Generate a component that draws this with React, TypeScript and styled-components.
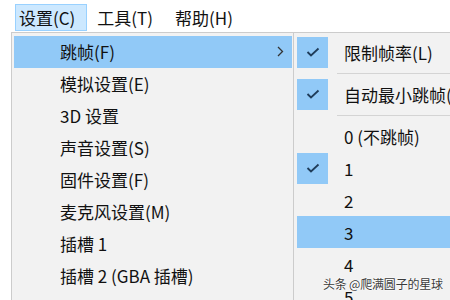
import React from "react";
import styled, { createGlobalStyle } from "styled-components";

const Global = createGlobalStyle`
  html, body { margin: 0; padding: 0; background: #ffffff; }
  body { font-family: "Noto Sans CJK SC", "Noto Sans", sans-serif; }
`;

const Screen = styled.div`
  position: relative;
  width: 450px;
  height: 300px;
  overflow: hidden;
  background: #ffffff;
  color: #111111;
  font-family: "Noto Sans CJK SC", "Noto Sans", sans-serif;
`;

const MenuBar = styled.div`
  display: flex;
  align-items: stretch;
  height: 32px;
  box-sizing: border-box;
  padding: 4px 0 1px 15px;
  gap: 6px;
  background: #ffffff;
`;

const BarItem = styled.div<{ $active?: boolean }>`
  display: flex;
  align-items: center;
  box-sizing: border-box;
  padding: 0 11px 1px 3px;
  font-size: 17px;
  border: 1px solid ${(p) => (p.$active ? "#99d1ff" : "transparent")};
  background: ${(p) => (p.$active ? "#cce8ff" : "transparent")};
`;

const Dropdowns = styled.div`
  display: flex;
  align-items: flex-start;
  margin-left: 11px;
`;

const MainMenu = styled.div`
  width: 284px;
  flex: none;
  box-sizing: border-box;
  background: #f2f2f2;
  border: 1px solid #cccccc;
  padding: 3px 2px;
`;

const Item = styled.div<{ $hl?: boolean }>`
  display: flex;
  align-items: center;
  height: 32px;
  box-sizing: border-box;
  padding: 0 8px 1px 46px;
  font-size: 17px;
  background: ${(p) => (p.$hl ? "#91c9f7" : "transparent")};
  white-space: nowrap;
`;

const Label = styled.span`
  flex: 1;
`;

const SubMenu = styled.div`
  flex: none;
  width: 200px;
  margin-left: -2px;
  box-sizing: border-box;
  background: #f2f2f2;
  border-left: 1px solid #cccccc;
  border-top: 1px solid #cccccc;
  padding: 3px 0 0 3px;
`;

const SubItem = styled.div<{ $hl?: boolean }>`
  display: flex;
  align-items: center;
  height: 32px;
  font-size: 17px;
  background: ${(p) => (p.$hl ? "#91c9f7" : "transparent")};
  white-space: nowrap;
`;

const CheckCell = styled.div`
  width: 32px;
  height: 32px;
  flex: none;
  display: flex;
  align-items: center;
  justify-content: flex-start;
  margin-right: 15px;
`;

const CheckBox = styled.div`
  width: 31px;
  height: 31px;
  background: #91c9f7;
  display: flex;
  align-items: center;
  justify-content: center;
`;

const Separator = styled.div`
  height: 10px;
  display: flex;
  align-items: center;
  padding-left: 40px;
  &::after {
    content: "";
    flex: 1;
    height: 1px;
    background: #d4d4d4;
  }
`;

const Watermark = styled.div`
  position: absolute;
  left: 323px;
  top: 275px;
  font-size: 12px;
  letter-spacing: -0.2px;
  color: #3a3a3a;
  text-shadow: 0 0 2px #ffffff, 0 0 2px #ffffff, 0 0 1px #ffffff;
  white-space: nowrap;
`;

const Check = () => (
  <svg width="14" height="10" viewBox="0 0 14 10">
    <polyline points="1.5,5 5,8.5 12.5,1.5" fill="none" stroke="#1f3c5a" strokeWidth="1.8" />
  </svg>
);

const Chevron = () => (
  <svg width="7" height="11" viewBox="0 0 7 11">
    <polyline points="1,1 5.5,5.5 1,10" fill="none" stroke="#333" strokeWidth="1.3" />
  </svg>
);

const mainItems = [
  "模拟设置(E)",
  "3D 设置",
  "声音设置(S)",
  "固件设置(F)",
  "麦克风设置(M)",
  "插槽 1",
  "插槽 2 (GBA 插槽)",
  "路径设置与显示设置(P)",
];

const frames = [
  { t: "0 (不跳帧)", c: false, h: false },
  { t: "1", c: true, h: false },
  { t: "2", c: false, h: false },
  { t: "3", c: false, h: true },
  { t: "4", c: false, h: false },
  { t: "5", c: false, h: false },
];

export default function App() {
  return (
    <Screen>
      <Global />
      <MenuBar>
        <BarItem $active>设置(C)</BarItem>
        <BarItem>工具(T)</BarItem>
        <BarItem>帮助(H)</BarItem>
      </MenuBar>
      <Dropdowns>
        <MainMenu>
          <Item $hl>
            <Label>跳帧(F)</Label>
            <Chevron />
          </Item>
          {mainItems.map((m) => (
            <Item key={m}>
              <Label>{m}</Label>
            </Item>
          ))}
        </MainMenu>
        <SubMenu>
          <SubItem>
            <CheckCell>
              <CheckBox>
                <Check />
              </CheckBox>
            </CheckCell>
            限制帧率(L)
          </SubItem>
          <Separator />
          <SubItem>
            <CheckCell>
              <CheckBox>
                <Check />
              </CheckBox>
            </CheckCell>
            自动最小跳帧(A)
          </SubItem>
          <Separator />
          {frames.map((f) => (
            <SubItem key={f.t} $hl={f.h}>
              <CheckCell>
                {f.c && (
                  <CheckBox>
                    <Check />
                  </CheckBox>
                )}
              </CheckCell>
              {f.t}
            </SubItem>
          ))}
        </SubMenu>
      </Dropdowns>
      <Watermark>头条 @爬满圆子的星球</Watermark>
    </Screen>
  );
}
